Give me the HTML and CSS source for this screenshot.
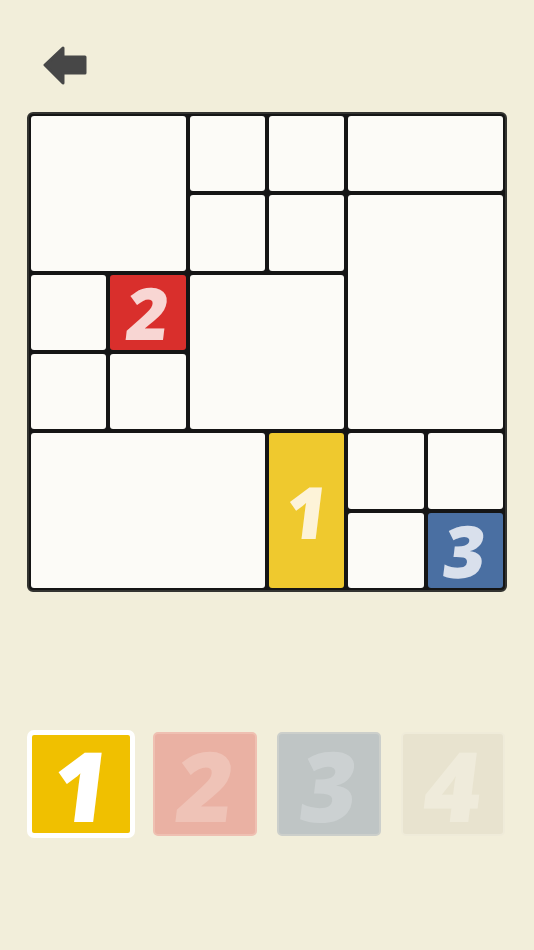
FILE: index.html
```html
<!DOCTYPE html>
<html>
<head>
<meta charset="utf-8">
<link rel="stylesheet" href="styles.css">
</head>
<body>
<div class="page">
  <div class="header">
    <svg class="back" width="44" height="40" viewBox="0 0 44 40">
      <polygon points="2,19 20,2 20,11 42,11 42,27 20,27 20,37" fill="#474747" stroke="#474747" stroke-width="3" stroke-linejoin="round"/>
    </svg>
  </div>
  <div class="board">
    <div class="cell a"></div>
    <div class="cell b"></div>
    <div class="cell c"></div>
    <div class="cell d"></div>
    <div class="cell e"></div>
    <div class="cell f"></div>
    <div class="cell g"></div>
    <div class="cell h"></div>
    <div class="cell i red"><span class="num">2</span></div>
    <div class="cell j"></div>
    <div class="cell k"></div>
    <div class="cell l"></div>
    <div class="cell m"></div>
    <div class="cell n yellow"><span class="num one">1</span></div>
    <div class="cell o"></div>
    <div class="cell p"></div>
    <div class="cell q"></div>
    <div class="cell r blue"><span class="num">3</span></div>
  </div>
  <div class="tiles">
    <div class="tile t1 selected"><span class="tnum one">1</span></div>
    <div class="tile t2"><span class="tnum">2</span></div>
    <div class="tile t3"><span class="tnum">3</span></div>
    <div class="tile t4"><span class="tnum">4</span></div>
  </div>
</div>
</body>
</html>
```
FILE: styles.css
```css
html, body {
  margin: 0;
  padding: 0;
  background: #f2eeda;
}
.page {
  width: 534px;
  height: 950px;
  font-family: "Open Sans", "Lato", sans-serif;
}
.header {
  padding: 46px 0 0 43px;
  height: 40px;
}
.back {
  display: block;
}
.board {
  margin: 26px 0 0 27px;
  width: 480px;
  height: 480px;
  box-sizing: border-box;
  border: 2px solid #333330;
  border-radius: 6px;
  padding: 2px;
  background: #151515;
  display: grid;
  grid-template-columns: repeat(6, 1fr);
  grid-template-rows: repeat(6, 1fr);
  gap: 4px;
}
.cell {
  background: #fcfbf7;
  border-radius: 3px;
  display: flex;
  align-items: center;
  justify-content: center;
}
.a { grid-column: 1 / 3; grid-row: 1 / 3; }
.b { grid-column: 3; grid-row: 1; }
.c { grid-column: 4; grid-row: 1; }
.d { grid-column: 5 / 7; grid-row: 1; }
.e { grid-column: 3; grid-row: 2; }
.f { grid-column: 4; grid-row: 2; }
.g { grid-column: 5 / 7; grid-row: 2 / 5; }
.h { grid-column: 1; grid-row: 3; }
.i { grid-column: 2; grid-row: 3; }
.j { grid-column: 3 / 5; grid-row: 3 / 5; }
.k { grid-column: 1; grid-row: 4; }
.l { grid-column: 2; grid-row: 4; }
.m { grid-column: 1 / 4; grid-row: 5 / 7; }
.n { grid-column: 4; grid-row: 5 / 7; }
.o { grid-column: 5; grid-row: 5; }
.p { grid-column: 6; grid-row: 5; }
.q { grid-column: 5; grid-row: 6; }
.r { grid-column: 6; grid-row: 6; }
.red { background: #d92f2c; color: #f8d6d3; }
.yellow { background: #efc92e; color: #fdf3d8; }
.blue { background: #4a6fa2; color: #d9e0ec; }
.num {
  font-size: 72px;
  font-weight: 800;
  line-height: 1;
  display: inline-block;
  transform: skewX(-7deg);
}
.tiles {
  margin: 140px 0 0 29px;
  display: flex;
  gap: 20px;
}
.tile {
  width: 104px;
  height: 104px;
  box-sizing: border-box;
  border-radius: 5px;
  border: 2px solid transparent;
  display: flex;
  align-items: center;
  justify-content: center;
}
.tnum {
  font-size: 97px;
  font-weight: 800;
  line-height: 1;
  display: inline-block;
  transform: skewX(-7deg);
}
.t1 {
  background: #f0c000;
  border: 3px solid #ffffff;
  box-shadow: 0 0 0 2px #ffffff;
  color: #ffffff;
}
.t2 {
  background: #eab1a3;
  border-color: #efc0b2;
  color: #efc3b7;
}
.t3 {
  background: #bfc5c5;
  border-color: #cccfcb;
  color: #ccd1d2;
}
.t4 {
  background: #e8e3cf;
  border-color: #efebd9;
  color: #efebdb;
}
```
